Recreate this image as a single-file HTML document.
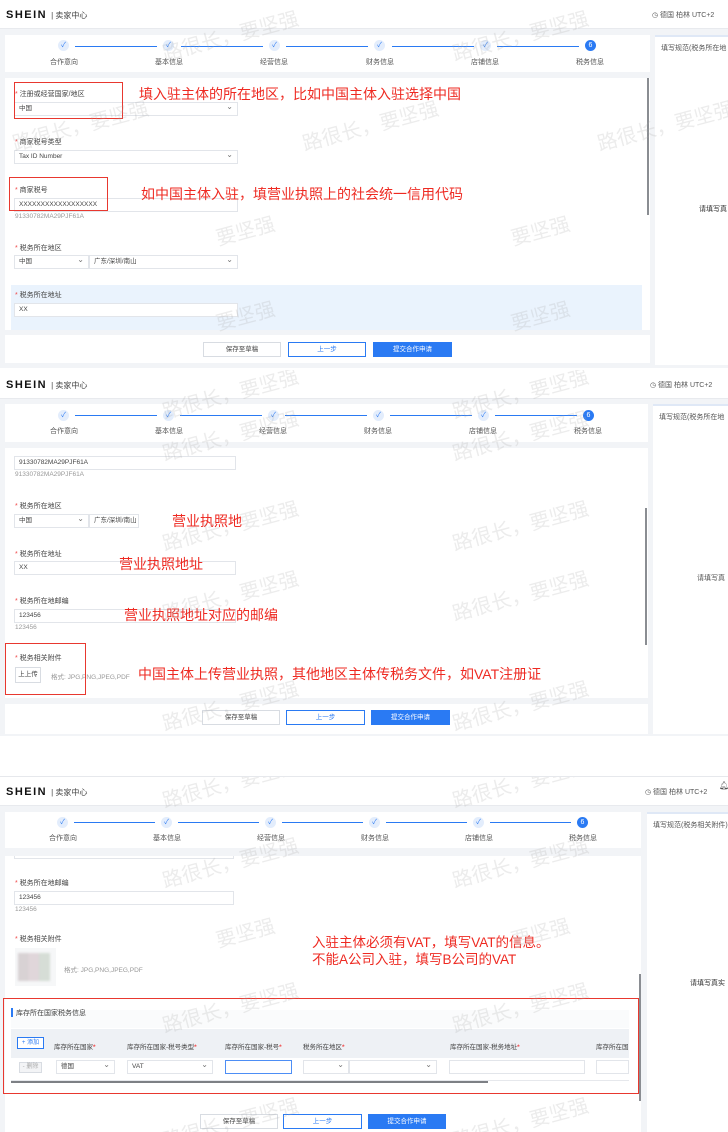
<!DOCTYPE html>
<html><head><meta charset="utf-8"><style>
*{margin:0;padding:0;box-sizing:border-box}
body{width:728px;height:1132px;background:#fff;position:relative;overflow:hidden;font-family:"Liberation Sans","Noto Sans CJK SC",sans-serif;color:#333}
.a{position:absolute}
.sec{position:absolute;left:0;width:728px;background:#f2f4f7;overflow:hidden}
.hdr{position:absolute;left:0;top:0;width:728px;height:29px;background:#fff;border-bottom:1px solid #e8eaee}
.logo{position:absolute;left:6px;top:9px;font-weight:bold;font-size:11px;letter-spacing:1.5px;color:#111}
.logo span{font-weight:normal;font-size:8px;letter-spacing:0;color:#444;margin-left:4px}
.tz{position:absolute;top:10px;font-size:7px;color:#555}
.card{position:absolute;background:#fff}
.dot{position:absolute;width:11px;height:11px;border-radius:50%;background:#e3edfc;color:#2a7af3;font-size:7px;text-align:center;line-height:11px}
.dot.on{background:#2a7af3;color:#fff}
.ln{position:absolute;height:1px;background:#2a7af3}
.sl{position:absolute;font-size:7px;color:#555;white-space:nowrap}
.lb{position:absolute;font-size:7px;color:#444;white-space:nowrap}
.lb:before{content:"* ";color:#f04a4a}
.in{position:absolute;height:14px;border:1px solid #e2e5ea;background:#fff;font-size:6.5px;color:#444;padding-left:4px;line-height:12px;white-space:nowrap;overflow:hidden}
.in.s:after{content:"⌄";position:absolute;right:4px;top:-2px;font-size:8px;color:#777}
.hint{position:absolute;font-size:6.5px;color:#999}
.rb{position:absolute;border:1.5px solid #e8382f}
.rt{position:absolute;color:#ee2a22;font-size:14px;white-space:nowrap}
.btn{position:absolute;height:15px;font-size:6.5px;text-align:center;line-height:13px;border:1px solid #d8dce2;color:#444;background:#fff}
.b2{border-color:#2a7af3;color:#2a7af3}
.b3{background:#2a7af3;border-color:#2a7af3;color:#fff}
.wm{position:absolute;color:rgba(170,170,170,.22);font-size:20px;transform:rotate(-15deg);white-space:nowrap}
.sb{position:absolute;width:2px;background:#8a8d92}
</style></head><body>

<!-- SECTION 1 -->
<div class="sec" style="top:0;height:368px">
<div class="hdr"><div class="logo">SHEIN<span>| 卖家中心</span></div><div class="tz" style="left:652px">◷ 德国 柏林 UTC+2</div></div>
<div class="card" style="left:5px;top:35px;width:645px;height:37px"></div>
<div class="dot" style="left:58px;top:40px">✓</div><div class="dot" style="left:163px;top:40px">✓</div><div class="dot" style="left:269px;top:40px">✓</div><div class="dot" style="left:374px;top:40px">✓</div><div class="dot" style="left:480px;top:40px">✓</div><div class="dot on" style="left:585px;top:40px">6</div>
<div class="ln" style="left:75px;width:82px;top:46px"></div><div class="ln" style="left:181px;width:82px;top:46px"></div><div class="ln" style="left:286px;width:82px;top:46px"></div><div class="ln" style="left:392px;width:82px;top:46px"></div><div class="ln" style="left:497px;width:82px;top:46px"></div>
<div class="sl" style="left:50px;top:57px">合作意向</div><div class="sl" style="left:155px;top:57px">基本信息</div><div class="sl" style="left:260px;top:57px">经营信息</div><div class="sl" style="left:366px;top:57px">财务信息</div><div class="sl" style="left:471px;top:57px">店铺信息</div><div class="sl" style="left:576px;top:57px">税务信息</div>
<div class="card" style="left:655px;top:35px;width:73px;height:330px;border-top:2px solid #dfe8f6"></div>
<div class="sl" style="left:661px;top:43px">填写规范(税务所在地</div><div class="sl" style="left:699px;top:204px;color:#333">请填写真</div>
<div class="card" style="left:5px;top:78px;width:645px;height:252px"></div>
<div class="lb" style="left:15px;top:89px">注册或经营国家/地区</div><div class="in s" style="left:14px;top:102px;width:224px">中国</div>
<div class="lb" style="left:15px;top:137px">商家税号类型</div><div class="in s" style="left:14px;top:150px;width:224px">Tax ID Number</div>
<div class="lb" style="left:15px;top:185px">商家税号</div><div class="in" style="left:14px;top:198px;width:224px">XXXXXXXXXXXXXXXXXX</div><div class="hint" style="left:15px;top:213px">91330782MA29PJF61A</div>
<div class="lb" style="left:15px;top:243px">税务所在地区</div><div class="in s" style="left:14px;top:255px;width:75px">中国</div><div class="in s" style="left:89px;top:255px;width:149px">广东/深圳/南山</div>
<div class="a" style="left:11px;top:285px;width:631px;height:45px;background:#eaf3fd"></div>
<div class="lb" style="left:15px;top:290px">税务所在地址</div><div class="in" style="left:14px;top:303px;width:224px">XX</div>
<div class="sb" style="left:647px;top:78px;height:137px"></div>
<div class="card" style="left:5px;top:335px;width:645px;height:28px"></div>
<div class="btn" style="left:203px;top:342px;width:78px">保存至草稿</div><div class="btn b2" style="left:288px;top:342px;width:78px">上一步</div><div class="btn b3" style="left:373px;top:342px;width:79px">提交合作申请</div>
<div class="rb" style="left:14px;top:82px;width:109px;height:37px"></div>
<div class="rt" style="left:139px;top:84px">填入驻主体的所在地区，比如中国主体入驻选择中国</div>
<div class="rb" style="left:9px;top:177px;width:99px;height:34px"></div>
<div class="rt" style="left:141px;top:184px">如中国主体入驻，填营业执照上的社会统一信用代码</div>
<div class="wm" style="left:160px;top:20px">路很长，要坚强</div><div class="wm" style="left:450px;top:20px">路很长，要坚强</div><div class="wm" style="left:10px;top:110px">路很长，要坚强</div><div class="wm" style="left:300px;top:110px">路很长，要坚强</div><div class="wm" style="left:595px;top:110px">路很长，要坚强</div><div class="wm" style="left:215px;top:215px">要坚强</div><div class="wm" style="left:510px;top:215px">要坚强</div><div class="wm" style="left:215px;top:300px">要坚强</div><div class="wm" style="left:510px;top:300px">要坚强</div>
</div>

<!-- SECTION 2 -->
<div class="sec" style="top:370px;height:366px">
<div class="hdr"><div class="logo">SHEIN<span>| 卖家中心</span></div><div class="tz" style="left:650px">◷ 德国 柏林 UTC+2</div></div>
<div class="card" style="left:5px;top:34px;width:643px;height:38px"></div>
<div class="dot" style="left:58px;top:40px">✓</div><div class="dot" style="left:163px;top:40px">✓</div><div class="dot" style="left:268px;top:40px">✓</div><div class="dot" style="left:373px;top:40px">✓</div><div class="dot" style="left:478px;top:40px">✓</div><div class="dot on" style="left:583px;top:40px">6</div>
<div class="ln" style="left:75px;width:82px;top:45px"></div><div class="ln" style="left:180px;width:82px;top:45px"></div><div class="ln" style="left:285px;width:82px;top:45px"></div><div class="ln" style="left:390px;width:82px;top:45px"></div><div class="ln" style="left:495px;width:82px;top:45px"></div>
<div class="sl" style="left:50px;top:56px">合作意向</div><div class="sl" style="left:155px;top:56px">基本信息</div><div class="sl" style="left:259px;top:56px">经营信息</div><div class="sl" style="left:364px;top:56px">财务信息</div><div class="sl" style="left:469px;top:56px">店铺信息</div><div class="sl" style="left:574px;top:56px">税务信息</div>
<div class="card" style="left:653px;top:34px;width:75px;height:330px;border-top:2px solid #dfe8f6"></div>
<div class="sl" style="left:659px;top:42px">填写规范(税务所在地</div><div class="sl" style="left:697px;top:203px">请填写真</div>
<div class="card" style="left:5px;top:78px;width:643px;height:250px"></div>
<div class="in" style="left:14px;top:86px;width:222px">91330782MA29PJF61A</div><div class="hint" style="left:15px;top:101px">91330782MA29PJF61A</div>
<div class="lb" style="left:15px;top:131px">税务所在地区</div><div class="in s" style="left:14px;top:144px;width:75px">中国</div><div class="in" style="left:89px;top:144px;width:50px">广东/深圳/南山</div>
<div class="lb" style="left:15px;top:179px">税务所在地址</div><div class="in" style="left:14px;top:191px;width:222px">XX</div>
<div class="lb" style="left:15px;top:226px">税务所在地邮编</div><div class="in" style="left:14px;top:239px;width:222px">123456</div><div class="hint" style="left:15px;top:254px">123456</div>
<div class="lb" style="left:15px;top:283px">税务相关附件</div><div class="btn" style="left:15px;top:297px;width:26px;height:16px">上上传</div><div class="hint" style="left:51px;top:301px">格式: JPG,PNG,JPEG,PDF</div>
<div class="sb" style="left:645px;top:138px;height:137px"></div>
<div class="card" style="left:5px;top:334px;width:643px;height:30px"></div>
<div class="btn" style="left:202px;top:340px;width:78px">保存至草稿</div><div class="btn b2" style="left:286px;top:340px;width:79px">上一步</div><div class="btn b3" style="left:371px;top:340px;width:79px">提交合作申请</div>
<div class="rt" style="left:172px;top:141px;font-size:14px">营业执照地</div>
<div class="rt" style="left:119px;top:184px">营业执照地址</div>
<div class="rt" style="left:124px;top:235px">营业执照地址对应的邮编</div>
<div class="rb" style="left:5px;top:273px;width:81px;height:52px"></div>
<div class="rt" style="left:138px;top:294px">中国主体上传营业执照，其他地区主体传税务文件，如VAT注册证</div>
<div class="wm" style="left:160px;top:8px">路很长，要坚强</div><div class="wm" style="left:450px;top:8px">路很长，要坚强</div><div class="wm" style="left:160px;top:50px">路很长，要坚强</div><div class="wm" style="left:450px;top:50px">路很长，要坚强</div><div class="wm" style="left:160px;top:140px">路很长，要坚强</div><div class="wm" style="left:450px;top:140px">路很长，要坚强</div><div class="wm" style="left:160px;top:210px">路很长，要坚强</div><div class="wm" style="left:450px;top:210px">路很长，要坚强</div><div class="wm" style="left:160px;top:320px">路很长，要坚强</div><div class="wm" style="left:450px;top:320px">路很长，要坚强</div>
</div>

<!-- SECTION 3 -->
<div class="sec" style="top:776px;height:356px;border-top:1px solid #e6e8ec">
<div class="hdr" style="height:29px"><div class="logo" style="top:9px">SHEIN<span>| 卖家中心</span></div><div class="tz" style="left:645px">◷ 德国 柏林 UTC+2</div><div class="a" style="left:719px;top:4px;font-size:8px;color:#555">🔔︎</div></div>
<div class="card" style="left:5px;top:35px;width:636px;height:36px"></div>
<div class="dot" style="left:57px;top:40px">✓</div><div class="dot" style="left:161px;top:40px">✓</div><div class="dot" style="left:265px;top:40px">✓</div><div class="dot" style="left:369px;top:40px">✓</div><div class="dot" style="left:473px;top:40px">✓</div><div class="dot on" style="left:577px;top:40px">6</div>
<div class="ln" style="left:74px;width:81px;top:45px"></div><div class="ln" style="left:178px;width:81px;top:45px"></div><div class="ln" style="left:282px;width:81px;top:45px"></div><div class="ln" style="left:386px;width:81px;top:45px"></div><div class="ln" style="left:490px;width:81px;top:45px"></div>
<div class="sl" style="left:49px;top:56px">合作意向</div><div class="sl" style="left:153px;top:56px">基本信息</div><div class="sl" style="left:257px;top:56px">经营信息</div><div class="sl" style="left:361px;top:56px">财务信息</div><div class="sl" style="left:465px;top:56px">店铺信息</div><div class="sl" style="left:569px;top:56px">税务信息</div>
<div class="card" style="left:647px;top:35px;width:81px;height:330px;border-top:2px solid #dfe8f6"></div>
<div class="sl" style="left:653px;top:43px">填写规范(税务相关附件)</div><div class="sl" style="left:690px;top:201px;color:#333">请填写真实</div>
<div class="card" style="left:5px;top:79px;width:636px;height:262px"></div>
<div class="a" style="left:14px;top:79px;width:220px;height:3px;border:1px solid #e2e5ea;border-top:none"></div>
<div class="lb" style="left:15px;top:101px">税务所在地邮编</div><div class="in" style="left:14px;top:114px;width:220px">123456</div><div class="hint" style="left:15px;top:129px">123456</div>
<div class="lb" style="left:15px;top:157px">税务相关附件</div>
<div class="a" style="left:15px;top:171px;width:41px;height:38px;background:#f6f7f8"><div class="a" style="left:3px;top:5px;width:32px;height:28px;background:linear-gradient(90deg,#d8d2d4 0 33%,#e0d6da 33% 66%,#d6ddd6 66%);filter:blur(1px)"></div></div>
<div class="hint" style="left:64px;top:187px">格式: JPG,PNG,JPEG,PDF</div>
<div class="a" style="left:11px;top:233px;width:618px;height:18px;background:#fafbfc"></div>
<div class="a" style="left:11px;top:231px;width:2px;height:9px;background:#2a7af3"></div>
<div class="a" style="left:16px;top:231px;font-size:7px;color:#444">库存所在国家税务信息</div>
<div class="a" style="left:11px;top:252px;width:618px;height:29px;background:#eef1f5"></div>
<div class="a" style="left:11px;top:281px;width:618px;height:23px;background:#fff;border-bottom:1px solid #e6e8ec"></div>
<div class="btn b2" style="left:17px;top:260px;width:27px;height:12px;line-height:10px;font-size:6px">+ 添加</div>
<div class="btn" style="left:19px;top:285px;width:23px;height:11px;line-height:9px;font-size:6px;background:#f3f4f6;color:#aaa">- 删除</div>
<div class="a" style="font-size:6.5px;color:#444;left:54px;top:264px;white-space:nowrap">库存所在国家<b style="color:#f04a4a">*</b></div>
<div class="a" style="font-size:6.5px;color:#444;left:127px;top:264px;white-space:nowrap">库存所在国家-税号类型<b style="color:#f04a4a">*</b></div>
<div class="a" style="font-size:6.5px;color:#444;left:225px;top:264px;white-space:nowrap">库存所在国家-税号<b style="color:#f04a4a">*</b></div>
<div class="a" style="font-size:6.5px;color:#444;left:303px;top:264px;white-space:nowrap">税务所在地区<b style="color:#f04a4a">*</b></div>
<div class="a" style="font-size:6.5px;color:#444;left:450px;top:264px;white-space:nowrap">库存所在国家-税务地址<b style="color:#f04a4a">*</b></div>
<div class="a" style="font-size:6.5px;color:#444;left:596px;top:264px;white-space:nowrap;width:33px;overflow:hidden">库存所在国家</div>
<div class="in s" style="left:56px;top:283px;width:59px">德国</div>
<div class="in s" style="left:127px;top:283px;width:86px">VAT</div>
<div class="in" style="left:225px;top:283px;width:67px;border-color:#4d8ef5"></div>
<div class="in s" style="left:303px;top:283px;width:46px"></div><div class="in s" style="left:349px;top:283px;width:88px"></div>
<div class="in" style="left:449px;top:283px;width:136px"></div><div class="in" style="left:596px;top:283px;width:33px"></div>
<div class="a" style="left:11px;top:304px;width:477px;height:2px;background:#7d8085"></div>
<div class="sb" style="left:639px;top:197px;height:127px"></div>
<div class="card" style="left:5px;top:331px;width:636px;height:30px"></div>
<div class="btn" style="left:200px;top:337px;width:78px">保存至草稿</div><div class="btn b2" style="left:283px;top:337px;width:79px">上一步</div><div class="btn b3" style="left:368px;top:337px;width:78px">提交合作申请</div>
<div class="rt" style="left:312px;top:157px;font-size:13.5px;line-height:17px">入驻主体必须有VAT，填写VAT的信息。<br>不能A公司入驻，填写B公司的VAT</div>
<div class="rb" style="left:3px;top:221px;width:636px;height:96px"></div>
<div class="wm" style="left:160px;top:-10px">路很长，要坚强</div><div class="wm" style="left:450px;top:-10px">路很长，要坚强</div><div class="wm" style="left:160px;top:70px">路很长，要坚强</div><div class="wm" style="left:450px;top:70px">路很长，要坚强</div><div class="wm" style="left:215px;top:140px">要坚强</div><div class="wm" style="left:510px;top:140px">要坚强</div><div class="wm" style="left:160px;top:215px">路很长，要坚强</div><div class="wm" style="left:450px;top:215px">路很长，要坚强</div><div class="wm" style="left:160px;top:330px">路很长，要坚强</div><div class="wm" style="left:450px;top:330px">路很长，要坚强</div>
</div>
</body></html>
